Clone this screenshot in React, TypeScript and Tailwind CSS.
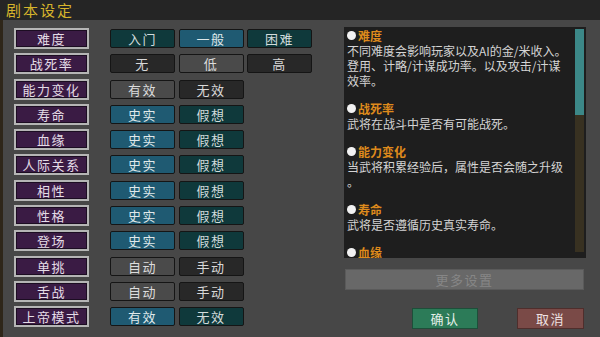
import React from 'react'

type Tone = 'blue' | 'teal' | 'grey' | 'dark'

const toneClass: Record<Tone, string> = {
  blue: 'bg-[#1f5a72] text-[#dfe8ea]',
  teal: 'bg-[#0f393b] text-[#d2dcdc]',
  grey: 'bg-[#4a4a4a] text-[#dcdcdc]',
  dark: 'bg-[#282828] text-[#d8d8d8]',
}

const rows: { label: string; options: [string, Tone][] }[] = [
  { label: '难度', options: [['入门', 'teal'], ['一般', 'blue'], ['困难', 'teal']] },
  { label: '战死率', options: [['无', 'dark'], ['低', 'grey'], ['高', 'dark']] },
  { label: '能力变化', options: [['有效', 'grey'], ['无效', 'dark']] },
  { label: '寿命', options: [['史实', 'blue'], ['假想', 'teal']] },
  { label: '血缘', options: [['史实', 'blue'], ['假想', 'teal']] },
  { label: '人际关系', options: [['史实', 'blue'], ['假想', 'teal']] },
  { label: '相性', options: [['史实', 'blue'], ['假想', 'teal']] },
  { label: '性格', options: [['史实', 'blue'], ['假想', 'teal']] },
  { label: '登场', options: [['史实', 'blue'], ['假想', 'teal']] },
  { label: '单挑', options: [['自动', 'grey'], ['手动', 'dark']] },
  { label: '舌战', options: [['自动', 'grey'], ['手动', 'dark']] },
  { label: '上帝模式', options: [['有效', 'blue'], ['无效', 'teal']] },
]

// help text shown in the right-hand panel
const help: { title: string; lines: string[] }[] = [
  {
    title: '难度',
    lines: ['不同难度会影响玩家以及AI的金/米收入。', '登用、计略/计谋成功率。以及攻击/计谋', '效率。'],
  },
  { title: '战死率', lines: ['武将在战斗中是否有可能战死。'] },
  { title: '能力变化', lines: ['当武将积累经验后，属性是否会随之升级', '。'] },
  { title: '寿命', lines: ['武将是否遵循历史真实寿命。'] },
  { title: '血缘', lines: [] },
]

export default function App() {
  return (
    <div
      className="w-[600px] h-[337px] flex flex-col bg-[#474747] overflow-hidden"
      style={{ fontFamily: '"Noto Sans CJK SC", "Noto Sans", sans-serif' }}
    >
      {/* title bar */}
      <div className="h-[20px] shrink-0 bg-[#252525] flex items-center pl-[6px]">
        <span className="text-[15px] leading-[20px] tracking-[2px] text-[#d6b42c]">剧本设定</span>
      </div>

      <div className="flex flex-1">
        <div className="w-[3px] bg-[#2e2619]" />

        {/* settings rows */}
        <div className="pl-[11px] pt-[8px] flex flex-col gap-[4.3px]">
          {rows.map((row) => (
            <div key={row.label} className="flex items-center h-[21px]">
              <div className="w-[75px] h-[21px] border-2 border-[#b5b5b5] bg-[#3a1b44] shadow-[inset_0_0_0_1px_#1c0d22] flex items-center justify-center text-[13px] tracking-[1.5px] text-[#e4dce6] leading-none">
                {row.label}
              </div>
              <div className="ml-[21px] flex gap-[3.5px]">
                {row.options.map(([text, tone]) => (
                  <div
                    key={text}
                    className={`w-[65px] h-[19px] rounded-[2px] border border-[#151515] flex items-center justify-center text-[13px] tracking-[1.5px] leading-none ${toneClass[tone]}`}
                  >
                    {text}
                  </div>
                ))}
              </div>
            </div>
          ))}
        </div>

        {/* help panel */}
        <div className="ml-[32px] pt-[7px] w-[242px] flex flex-col">
          <div className="h-[231px] bg-[#1e1e1e] flex">
            <div className="flex-1 pl-[3px] pt-[1px] flex flex-col gap-[13px] overflow-hidden">
              {help.map((h) => (
                <div key={h.title} className="text-[12px] leading-[15px] text-[#d4d4d4] whitespace-nowrap">
                  <div className="flex items-center gap-[2px]">
                    <span className="w-[9px] h-[9px] rounded-full bg-[#f2f2f2] inline-block" />
                    <span className="text-[#de8a1c] font-bold">{h.title}</span>
                  </div>
                  {h.lines.map((l, i) => (
                    <div key={i}>{l}</div>
                  ))}
                </div>
              ))}
            </div>
            <div className="w-[9px] mr-[2px] mt-[2px] mb-[6px] flex flex-col">
              <div className="h-[86px] bg-[#3c8888]" />
              <div className="flex-1 bg-[#383121]" />
            </div>
          </div>

          <div className="mt-[11px] ml-[1px] w-[239px] h-[21px] bg-[#686868] border border-[#5a5a5a] flex items-center justify-center text-[13px] tracking-[1.5px] text-[#868686] leading-none">
            更多设置
          </div>

          <div className="mt-[18px] flex">
            <div className="ml-[68px] w-[66px] h-[21px] bg-[#2c7b58] border border-[#1d4f39] flex items-center justify-center text-[13px] tracking-[1.5px] text-[#e4efe8] leading-none">
              确认
            </div>
            <div className="ml-[39px] w-[67px] h-[21px] bg-[#7a4a47] border border-[#4f2e2c] flex items-center justify-center text-[13px] tracking-[1.5px] text-[#eee2e2] leading-none">
              取消
            </div>
          </div>
        </div>
      </div>
    </div>
  )
}
